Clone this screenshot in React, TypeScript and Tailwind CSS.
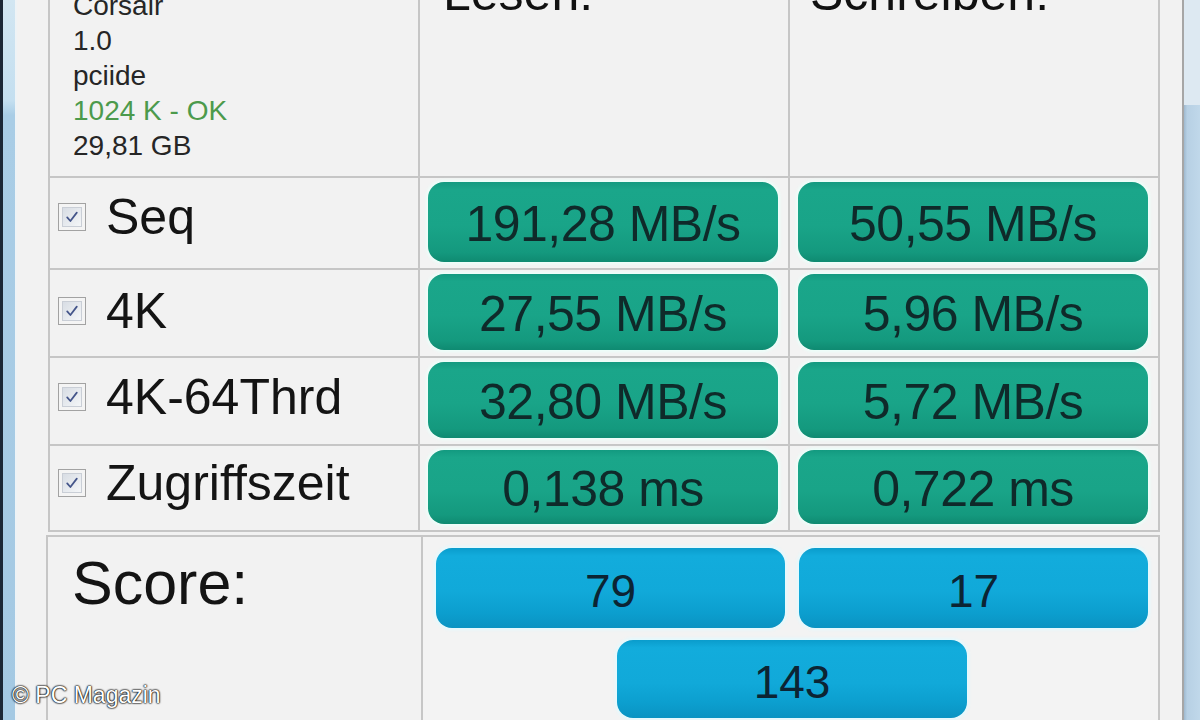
const rows = [
  { label: 'Seq', read: '191,28 MB/s', write: '50,55 MB/s', pad: 'pb-[12px]' },
  { label: '4K', read: '27,55 MB/s', write: '5,96 MB/s', pad: 'pb-[4px]' },
  { label: '4K-64Thrd', read: '32,80 MB/s', write: '5,72 MB/s', pad: 'pb-[8px]' },
  { label: 'Zugriffszeit', read: '0,138 ms', write: '0,722 ms', pad: 'pb-[10px]' },
]

const info = ['Corsair', '1.0', 'pciide', '1024 K - OK', '29,81 GB']

function CheckBox() {
  return (
    <div className="w-[28px] h-[28px] shrink-0 border border-[#a2a2a2] bg-[#f4f4f4] p-[3px]">
      <div className="w-full h-full border border-[#c9ced6] bg-gradient-to-br from-[#d8dde4] to-[#f4f6f8] flex items-center justify-center">
        <svg viewBox="0 0 20 20" className="w-[16px] h-[16px]">
          <path d="M4 10.5 L8 15 L16 4.5" fill="none" stroke="#44558a" strokeWidth="2.2" strokeLinecap="round" strokeLinejoin="round" />
        </svg>
      </div>
    </div>
  )
}

function GreenValue({ value }: { value: string }) {
  return (
    <div className="h-full rounded-[16px] bg-[linear-gradient(to_bottom,#139a80_0%,#1aa68a_10%,#19a488_55%,#14997e_88%,#0f8a71_100%)] shadow-[0_0_3px_2px_rgba(235,255,250,0.95)] flex items-center justify-center pt-[4px] text-[50px] leading-none text-[#0f2a2a] tracking-[-0.5px]">
      {value}
    </div>
  )
}

function BlueValue({ value, className }: { value: string; className?: string }) {
  return (
    <div
      className={
        'rounded-[16px] bg-[linear-gradient(to_bottom,#0a9ccc_0%,#12acdc_10%,#11a9d9_55%,#0c9fcf_80%,#0a93c2_100%)] shadow-[0_0_3px_2px_rgba(225,250,255,0.95)] flex items-center justify-center pt-[6px] text-[46px] leading-none text-[#0c2433] ' +
        (className ?? '')
      }
    >
      {value}
    </div>
  )
}

export default function App() {
  return (
    <div className="relative w-[1200px] h-[720px] overflow-hidden flex bg-[#f2f2f2] font-[family-name:Liberation_Sans,Arial,sans-serif]">
      {/* left window frame */}
      <div className="flex shrink-0">
        <div className="w-[3px] bg-[#1b2736]" />
        <div className="w-[12px] bg-[linear-gradient(to_bottom,#d2e6f2_0%,#c4dff0_14%,#a9cde6_16%,#a4c9e3_100%)]" />
        <div className="w-[2px] bg-[#eef3f6]" />
      </div>

      {/* window body */}
      <div className="flex-1 flex flex-col pl-[31px] pr-[22px]">
        <div className="-mt-[2px] grid grid-cols-[368px_368px_368px] grid-rows-[176px_90px_86px_86px_84px] gap-[2px] bg-[#c6c6c6] border-2 border-[#c6c6c6]">
          {/* header row */}
          <div className="bg-[#f2f2f2] pl-[23px] overflow-hidden">
            <div className="-mt-[12px] text-[28px] leading-[35px] text-[#262626]">
              {info.map((t) => (
                <div key={t} className={t.includes('OK') ? 'text-[#4c9a4c]' : ''}>
                  {t}
                </div>
              ))}
            </div>
          </div>
          <div className="bg-[#f2f2f2] pl-[23px] overflow-hidden">
            <div className="-mt-[32px] text-[50px] leading-none text-[#111]">Lesen:</div>
          </div>
          <div className="bg-[#f2f2f2] pl-[20px] overflow-hidden">
            <div className="-mt-[32px] text-[50px] leading-none text-[#111]">Schreiben:</div>
          </div>

          {rows.map((r) => (
            <div key={r.label} className="contents">
              <div className={'bg-[#f2f2f2] pl-[8px] flex items-center gap-[20px] ' + r.pad}>
                <CheckBox />
                <span className="text-[50px] leading-none text-[#141414]">{r.label}</span>
              </div>
              <div className="bg-[#f3f3f3] pt-[4px] pb-[6px] pl-[8px] pr-[10px]">
                <GreenValue value={r.read} />
              </div>
              <div className="bg-[#f3f3f3] pt-[4px] pb-[6px] pl-[8px] pr-[10px]">
                <GreenValue value={r.write} />
              </div>
            </div>
          ))}
        </div>

        {/* score box */}
        <div className="mt-[3px] -ml-[2px] h-[200px] shrink-0 grid grid-cols-[373px_1fr] gap-[2px] bg-[#c6c6c6] border-2 border-[#c6c6c6]">
          <div className="bg-[#f2f2f2] pl-[24px] pt-[16px]">
            <div className="text-[61px] leading-none text-[#141414]">Score:</div>
          </div>
          <div className="bg-[#f3f3f3] pt-[11px] pl-[13px] pr-[10px] grid grid-cols-2 grid-rows-[80px_78px] gap-x-[14px] gap-y-[12px]">
            <BlueValue value="79" />
            <BlueValue value="17" />
            <BlueValue value="143" className="col-span-2 justify-self-center w-[350px]" />
          </div>
        </div>
      </div>

      {/* right frame / scrollbar */}
      <div className="flex shrink-0">
        <div className="w-[2px] bg-[#a6a6a6]" />
        <div className="w-[16px] flex flex-col">
          <div className="h-[105px] bg-[#dde9f2]" />
          <div className="flex-1 bg-[linear-gradient(to_right,#9fb9cf_0%,#b7d0e4_20%,#c0d8ea_100%)]" />
        </div>
      </div>

      {/* watermark */}
      <div className="absolute left-[12px] top-[684px] text-[23px] leading-none text-white [text-shadow:0_0_2px_#000,0_0_2px_#000,0_0_1px_#000]">
        © PC Magazin
      </div>
    </div>
  )
}
